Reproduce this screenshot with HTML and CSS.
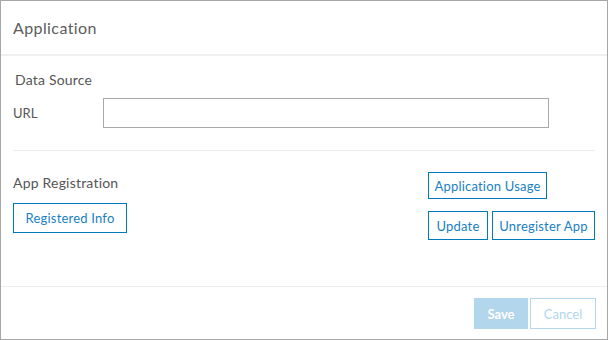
FILE: index.html
```html
<!DOCTYPE html>
<html>
<head>
<meta charset="utf-8">
<link rel="stylesheet" href="styles.css">
</head>
<body>
<div class="dialog">
  <div class="header"><span class="title">Application</span></div>
  <div class="content">
    <div class="section-label ds">Data Source</div>
    <div class="url-row">
      <label class="url-label">URL</label>
      <input class="url-input" type="text">
    </div>
    <div class="divider"></div>
    <div class="reg">
      <div class="reg-left">
        <div class="section-label">App Registration</div>
        <button class="btn btn-info">Registered Info</button>
      </div>
      <div class="reg-right">
        <button class="btn btn-usage">Application Usage</button>
        <div class="btn-row">
          <button class="btn btn-update">Update</button>
          <button class="btn btn-unreg">Unregister App</button>
        </div>
      </div>
    </div>
  </div>
  <div class="footer">
    <button class="btn-save">Save</button>
    <button class="btn-cancel">Cancel</button>
  </div>
</div>
</body>
</html>
```
FILE: styles.css
```css
html, body {
  margin: 0;
  padding: 0;
  background: #fff;
}
.dialog {
  width: 608px;
  height: 340px;
  box-sizing: border-box;
  border: 1px solid #a6a6a6;
  display: flex;
  flex-direction: column;
  font-family: "Lato", "Open Sans", sans-serif;
  color: #555;
}
.header {
  height: 53px;
  border-bottom: 2px solid #efefef;
  display: flex;
  align-items: center;
  padding-left: 12px;
}
.title {
  font-size: 16px;
  color: #5c5c5c;
  letter-spacing: 0.4px;
}
.content {
  flex: 1;
  padding: 0 12px;
}
.section-label {
  font-size: 14px;
  line-height: 20px;
  letter-spacing: 0.2px;
}
.ds {
  margin-top: 14px;
  padding-left: 2px;
}
.url-row {
  display: flex;
  align-items: center;
  margin-top: 8px;
}
.url-label {
  width: 90px;
  font-size: 13px;
}
.url-input {
  width: 446px;
  height: 30px;
  box-sizing: border-box;
  border: 1px solid #a8a8a8;
  margin: 0;
  padding: 0 6px;
  outline: none;
}
.divider {
  margin-top: 22px;
  height: 1px;
  background: #ececec;
}
.reg {
  display: flex;
  justify-content: space-between;
}
.reg-left {
  margin-top: 22px;
  display: flex;
  flex-direction: column;
  align-items: flex-start;
}
.reg-right {
  margin-top: 21px;
  width: 167px;
  display: flex;
  flex-direction: column;
  align-items: flex-start;
}
.btn {
  font-family: "Lato", "Open Sans", sans-serif;
  font-size: 13px;
  letter-spacing: 0.2px;
  color: #1a7fc4;
  background: #fff;
  border: 1px solid #0079c1;
  box-sizing: border-box;
  padding: 0;
  margin: 0;
  cursor: pointer;
}
.btn-info {
  margin-top: 10px;
  width: 114px;
  height: 30px;
}
.btn-usage {
  width: 119px;
  height: 27px;
}
.btn-row {
  display: flex;
  gap: 4px;
  margin-top: 12px;
}
.btn-update {
  width: 60px;
  height: 29px;
}
.btn-unreg {
  width: 103px;
  height: 29px;
}
.footer {
  border-top: 1px solid #ececec;
  padding: 11px 11px 10px 12px;
  display: flex;
  justify-content: flex-end;
  gap: 2px;
}
.btn-save {
  width: 54px;
  height: 31px;
  background: #b2d6ec;
  color: #fff;
  border: none;
  font-family: "Lato", "Open Sans", sans-serif;
  font-size: 13px;
  font-weight: bold;
  padding: 0;
  margin: 0;
}
.btn-cancel {
  width: 66px;
  height: 31px;
  background: #fff;
  color: #b2d6ec;
  border: 1px solid #b2d6ec;
  box-sizing: border-box;
  font-family: "Lato", "Open Sans", sans-serif;
  font-size: 13px;
  padding: 0;
  margin: 0;
}
```
